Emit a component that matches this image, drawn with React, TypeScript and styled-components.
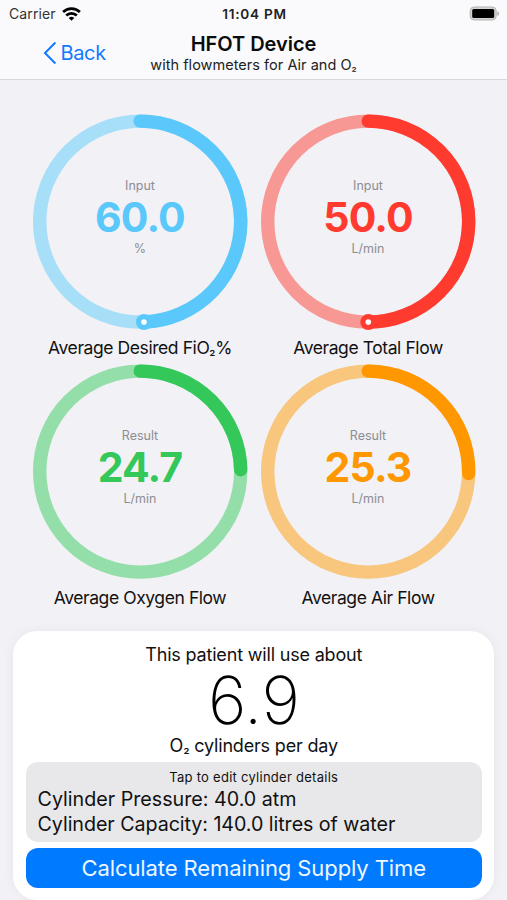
import React from "react";
import styled, { createGlobalStyle } from "styled-components";

const GlobalStyle = createGlobalStyle`
  * { box-sizing: border-box; }
  html, body { margin: 0; padding: 0; background: #f1f1f6; }
  body { font-family: Inter, "Liberation Sans", sans-serif; color: #111; overflow: hidden; }
`;

const Screen = styled.main`
  width: 507px;
  height: 900px;
  overflow: hidden;
  display: flex;
  flex-direction: column;
  background: #f1f1f6;
`;

const Header = styled.header`
  height: 80px;
  flex: none;
  background: #fafafc;
  border-bottom: 1.5px solid #d9d9dc;
`;

const StatusBar = styled.div`
  height: 27px;
  padding: 0 7px 0 9px;
  display: grid;
  grid-template-columns: 1fr auto 1fr;
  align-items: center;
  font-size: 14px;
`;

const Carrier = styled.span`
  display: flex;
  align-items: center;
  gap: 6px;
  color: #333;
  letter-spacing: 0.12px;
`;

const Clock = styled.time`
  font-weight: 600;
  font-size: 13.6px;
  letter-spacing: 0.75px;
  color: #222;
`;

const BatteryIcon = styled.svg`
  justify-self: end;
`;

const NavBar = styled.nav`
  height: 51px;
  display: grid;
  grid-template-columns: 1fr auto 1fr;
`;

const BackButton = styled.button`
  display: flex;
  align-items: center;
  gap: 3.5px;
  height: 51px;
  padding: 0 0 0 43px;
  border: 0;
  background: none;
  color: #137aff;
  font: 400 20px/24px Inter, "Liberation Sans", sans-serif;
  letter-spacing: -0.35px;
`;

const Titles = styled.div`
  text-align: center;
  padding-top: 5px;
`;

const Title = styled.h1`
  margin: 0;
  font-size: 20px;
  line-height: 25px;
  font-weight: 600;
  letter-spacing: -0.03px;
  color: #0c0c0c;
`;

const Subtitle = styled.p`
  margin: 0;
  font-size: 14.5px;
  line-height: 16px;
  letter-spacing: 0.03px;
  color: #222;
`;

const Subscript = styled.span`
  font-size: 0.8em;
  line-height: 1;
`;

const Gauges = styled.section`
  display: grid;
  grid-template-columns: 215px 215px;
  column-gap: 13px;
  grid-auto-rows: 250px;
  padding: 34px 0 0 32.5px;
  height: 551px;
  flex: none;
`;

const GaugeCell = styled.figure`
  margin: 0;
  display: flex;
  flex-direction: column;
  align-items: center;
`;

const Dial = styled.div`
  display: grid;
  width: 215px;
  height: 215px;
  > * { grid-area: 1 / 1; }
`;

const Readout = styled.div`
  display: flex;
  flex-direction: column;
  align-items: center;
  padding-top: 63px;
`;

const Hint = styled.span`
  font-size: 12.5px;
  line-height: 18px;
  color: #8d8d92;
`;

const Value = styled.strong<{ $color: string }>`
  font-size: 41px;
  line-height: 45px;
  font-weight: 700;
  letter-spacing: -0.85px;
  color: ${(p) => p.$color};
`;

const GaugeLabel = styled.figcaption`
  font-size: 17.5px;
  line-height: 37px;
  letter-spacing: -0.42px;
  white-space: nowrap;
`;

const Card = styled.section`
  width: 481px;
  height: 269px;
  flex: none;
  margin-left: 13px;
  padding: 12px 12px 0 12.5px;
  border-radius: 24px;
  background: #fff;
  box-shadow: 0 0 12px rgba(0, 0, 0, 0.05);
  display: flex;
  flex-direction: column;
  text-align: center;
`;

const CardText = styled.p`
  margin: 0;
  font-size: 18px;
  line-height: 24px;
  letter-spacing: -0.18px;
`;

const CylinderCount = styled.div`
  font-size: 66px;
  line-height: 67px;
  font-weight: 200;
  letter-spacing: -0.3px;
  color: #000;
`;

const Details = styled.button`
  margin-top: 4px;
  height: 79.5px;
  padding: 6px 12px 0;
  border: 0;
  border-radius: 12px;
  background: #e8e8ea;
  display: flex;
  flex-direction: column;
  align-items: flex-start;
  font-family: inherit;
  color: #111;
`;

const DetailsHint = styled.span`
  align-self: center;
  font-size: 13px;
  line-height: 19px;
  letter-spacing: 0.27px;
`;

const DetailsLine = styled.span<{ $spacing: number }>`
  font-size: 19.7px;
  line-height: 24.5px;
  letter-spacing: ${(p) => p.$spacing}px;
  white-space: nowrap;
`;

const PrimaryButton = styled.button`
  margin-top: 6px;
  height: 40px;
  padding: 0;
  border: 0;
  border-radius: 12px;
  background: #007aff;
  color: #eef6ff;
  font: 400 22px/40px Inter, "Liberation Sans", sans-serif;
  letter-spacing: -0.09px;
`;

interface GaugeProps {
  hint: string;
  value: string;
  unit: string;
  label: React.ReactNode;
  color: string;
  track: string;
  fraction: number;
  knob?: boolean;
}

const RADIUS = 100.5;
const CENTER_X = 107.2;
const CENTER_Y = 107.6;

function Gauge({ hint, value, unit, label, color, track, fraction, knob }: GaugeProps) {
  const angle = fraction * 2 * Math.PI;
  const x = CENTER_X + RADIUS * Math.sin(angle);
  const y = CENTER_Y - RADIUS * Math.cos(angle);
  return (
    <GaugeCell>
      <Dial>
        <svg width="215" height="215" viewBox="0 0 215 215" overflow="visible">
          <circle cx={CENTER_X} cy={CENTER_Y} r={RADIUS} fill="none" stroke={track} strokeWidth="13.4" />
          <path
            d={`M${CENTER_X} ${CENTER_Y - RADIUS}A${RADIUS} ${RADIUS} 0 0 1 ${x} ${y}`}
            fill="none"
            stroke={color}
            strokeWidth="13.4"
            strokeLinecap="round"
          />
          {knob && <circle cx={x} cy={y} r="8" fill={color} />}
          {knob && <circle cx={x} cy={y} r="2.8" fill="#fff" />}
        </svg>
        <Readout>
          <Hint>{hint}</Hint>
          <Value $color={color}>{value}</Value>
          <Hint>{unit}</Hint>
        </Readout>
      </Dial>
      <GaugeLabel>{label}</GaugeLabel>
    </GaugeCell>
  );
}

const gauges: GaugeProps[] = [
  { hint: "Input", value: "60.0", unit: "%", label: <>Average Desired FiO<Subscript>₂</Subscript>%</>, color: "#5ac8fa", track: "#a7def8", fraction: 0.494, knob: true },
  { hint: "Input", value: "50.0", unit: "L/min", label: "Average Total Flow", color: "#ff3b30", track: "#f89894", fraction: 0.4999, knob: true },
  { hint: "Result", value: "24.7", unit: "L/min", label: "Average Oxygen Flow", color: "#34c759", track: "#94dea9", fraction: 0.247 },
  { hint: "Result", value: "25.3", unit: "L/min", label: "Average Air Flow", color: "#ff9800", track: "#f8c67d", fraction: 0.253 },
];

export default function App() {
  return (
    <Screen>
      <GlobalStyle />
      <Header>
        <StatusBar>
          <Carrier>
            Carrier
            <svg width="19" height="14" viewBox="0 0 19 14" fill="none" stroke="#000" strokeWidth="2.7">
              <path d="M1.1 5a12 12 0 0 1 16.8 0" />
              <path d="M4.2 8.5a7.6 7.6 0 0 1 10.6 0" />
              <path d="M9.5 13.8 6.7 11a4 4 0 0 1 5.6 0Z" fill="#000" stroke="none" />
            </svg>
          </Carrier>
          <Clock>11:04 PM</Clock>
          <BatteryIcon width="31" height="15" viewBox="0 0 31 15">
            <rect x="1.2" y="1" width="26" height="13" rx="4" fill="#d4d4d4" stroke="#b4b4b4" strokeWidth="1" />
            <rect x="3.2" y="3" width="22" height="9" rx="1.6" fill="#000" />
            <path d="M28.4 5.2c2.2.8 2.2 3.8 0 4.6Z" fill="#aaa" />
          </BatteryIcon>
        </StatusBar>
        <NavBar>
          <BackButton>
            <svg width="14" height="24" viewBox="0 0 14 24" fill="none" stroke="#137aff" strokeWidth="2">
              <path d="M12.4 1.5 2 12l10.4 10.5" />
            </svg>
            Back
          </BackButton>
          <Titles>
            <Title>HFOT Device</Title>
            <Subtitle>
              with flowmeters for Air and O<Subscript>₂</Subscript>
            </Subtitle>
          </Titles>
        </NavBar>
      </Header>
      <Gauges>
        {gauges.map((g) => (
          <Gauge key={g.color} {...g} />
        ))}
      </Gauges>
      <Card>
        <CardText>This patient will use about</CardText>
        <CylinderCount>6.9</CylinderCount>
        <CardText>
          O<Subscript>₂</Subscript> cylinders per day
        </CardText>
        <Details>
          <DetailsHint>Tap to edit cylinder details</DetailsHint>
          <DetailsLine $spacing={0}>Cylinder Pressure: 40.0 atm</DetailsLine>
          <DetailsLine $spacing={-0.06}>Cylinder Capacity: 140.0 litres of water</DetailsLine>
        </Details>
        <PrimaryButton>Calculate Remaining Supply Time</PrimaryButton>
      </Card>
    </Screen>
  );
}
